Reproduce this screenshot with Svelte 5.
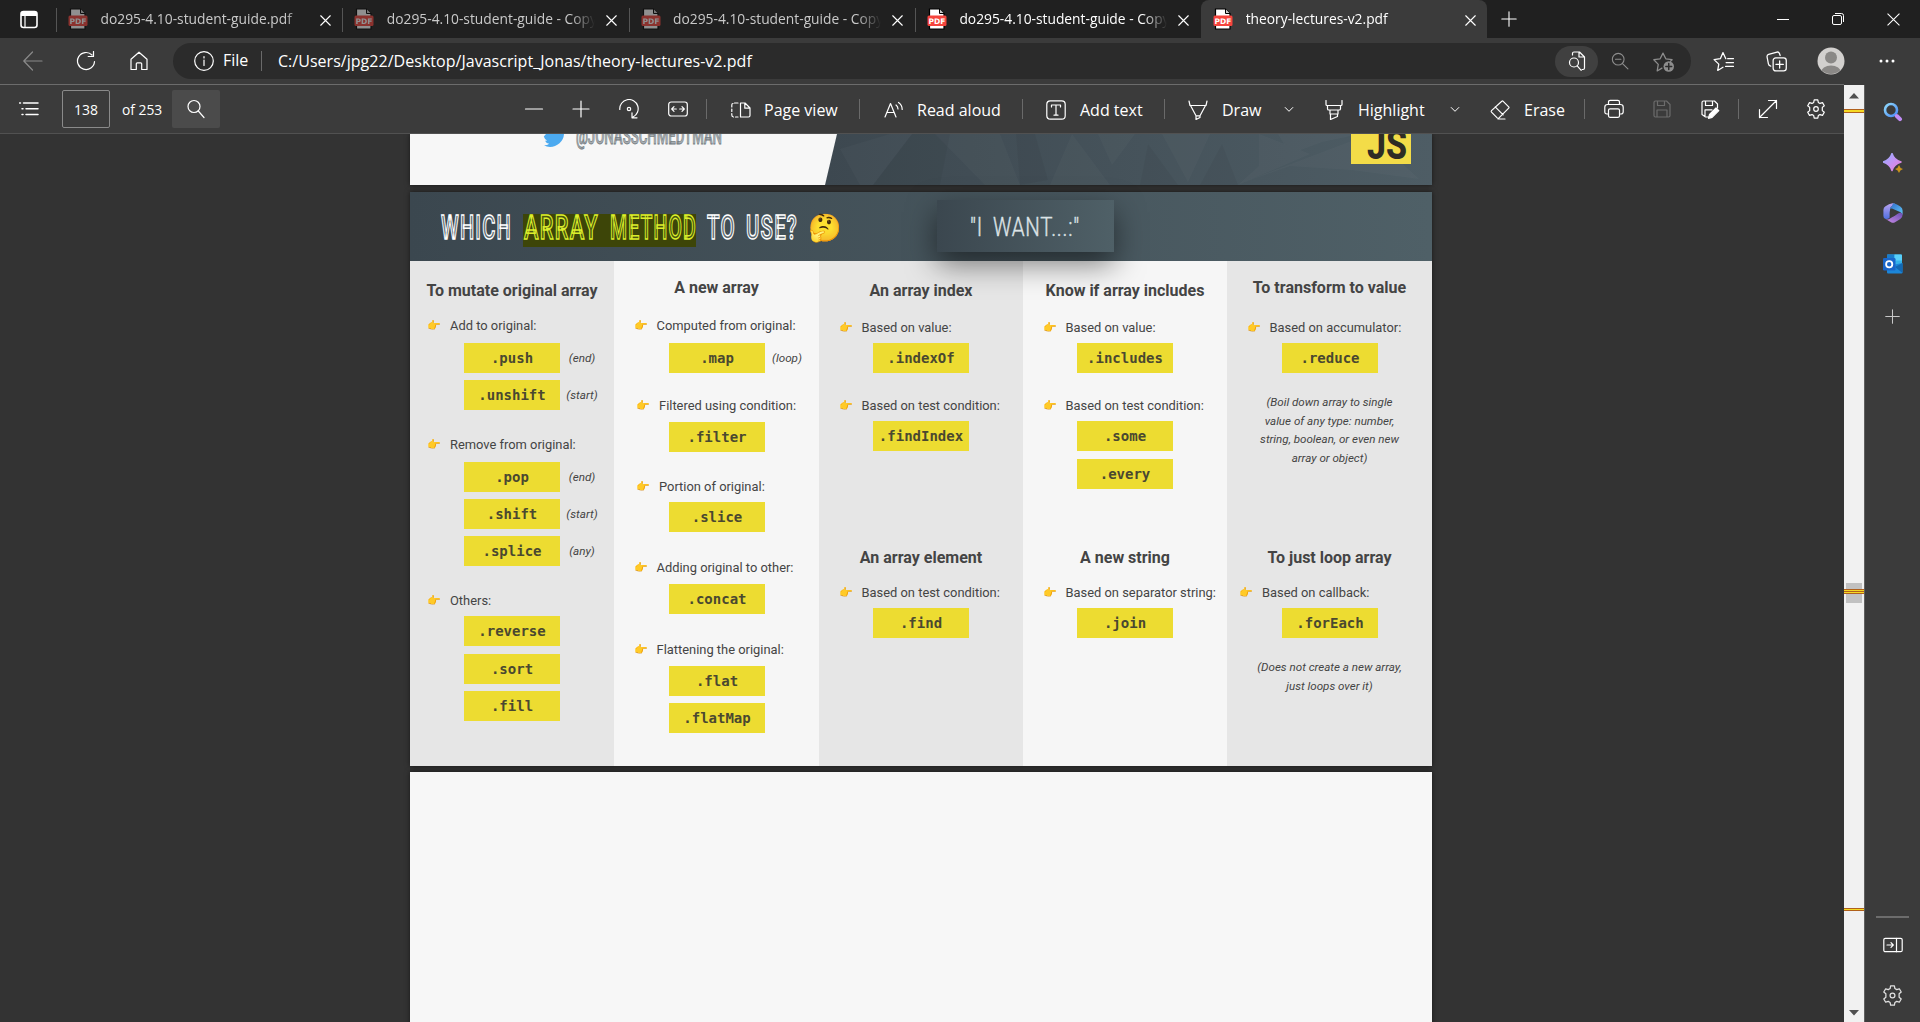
<script>
  const tabs = [
    { title: 'do295-4.10-student-guide.pdf', dim: true },
    { title: 'do295-4.10-student-guide - Copy', dim: true },
    { title: 'do295-4.10-student-guide - Copy', dim: true },
    { title: 'do295-4.10-student-guide - Copy', loaded: true },
    { title: 'theory-lectures-v2.pdf', loaded: true, active: true }
  ];

  // 20×20 line icons
  const icons = {
    close: '<path d="M5 5l10 10M15 5L5 15"/>',
    back: '<path d="M19 10H1.5M9.5 1L.8 10l8.700 9"/>',
    reload: '<path d="M18.500 10.500A8.500 8.500 0 1 1 16 4M17.500.5v5h-5.300"/>',
    home: '<path d="M2 8.300L10 1.200l8 7.100V18.500h-5.300v-5.700a1 1 0 0 0-1-1H8.300a1 1 0 0 0-1 1v5.700H2z"/>',
    info: '<circle cx="10" cy="10" r="9.300"/><path d="M10 9v5.500M10 5.500v1.500"/>',
    list: '<path d="M4.500 4H19M7 9.800h12M7 15.500h12M.5 4h1M3 9.800h1M3 15.500h1" stroke-width="1.500"/>',
    search: '<circle cx="8" cy="7.500" r="6"/><path d="M12.300 12L18 18.500"/>',
    minus: '<path d="M1.500 10h17"/>',
    plus: '<path d="M2 10h16M10 2v16"/>',
    rotate: '<path d="M.8 10.500A9.200 9.200 0 1 1 14 18M13 13.800v5h5"/><circle cx="10" cy="10" r="1.700"/>',
    fit: '<rect x=".7" y="3" width="18.600" height="14" rx="2.500"/><path d="M3.800 10h4.500M6 7.700L3.700 10 6 12.300M16.200 10h-4.500M14 7.700l2.300 2.300-2.300 2.300"/>',
    pages: '<path d="M9.500 3v14h8a1.500 1.500 0 0 0 1.500-1.500V8l-5-5zM13.800 3v5.200H19"/><path d="M7 3H3.500M2 3.500Q.8 3.500.8 5v2M.8 9v2.500M.8 13.500V15q0 1.800 1.700 2M4.500 17H7" />',
    read: '<path d="M1 17L6.500 3.500 12 17M3 12.500h7.200M12 5q2 1.500 2 4M14.500 2.500Q18.200 5 18.200 9.500"/>',
    text: '<rect x=".8" y=".8" width="18.400" height="18.400" rx="3.500"/><path d="M5.500 7V5h9v2M10 5v10M8 15.200h4"/>',
    draw: '<path d="M1 1l1 4.500h16L19 1M2.500 5.500L8 15.800h4L17.500 5.500M8 15.800v3.700l4-2v-1.700"/>',
    chevron: '<path d="M1.200 3.500L5 7.300l3.800-3.800" stroke-width="1"/>',
    highlight: '<path d="M2 .5v4q0 1 1 1h14q1 0 1-1v-4M3.500 5.500v3.200q0 1.300 1.300 1.300h10.400q1.300 0 1.300-1.300V5.500M6 10v4h8v-4M6.500 14v5.500l7-3V14"/>',
    erase: '<path d="M11.800 1.300q.7-.7 1.400 0L18.700 6.800q.7.700 0 1.400L9 17.900q-.9.800-1.800 0L1.500 12.200q-.7-.8 0-1.600zM5.200 6.800l8 8M8 19h7"/>',
    print: '<path d="M4.500 5.500V3q0-1.700 1.700-1.700h7.600q1.700 0 1.700 1.700v2.500M4.500 15H3q-2.200 0-2.200-2.200V8.200Q.8 5.500 3.500 5.500h13q2.700 0 2.700 2.700v4.600Q19.200 15 17 15h-1.500"/><rect x="4.500" y="9.800" width="11" height="8.500" rx="1.500"/>',
    save: '<path d="M2 3.500Q2 2 3.500 2h11L18 5.500v11q0 1.500-1.500 1.500h-13Q2 18 2 16.500zM5.500 2v4.500h7V2M5 18v-7h10v7"/>',
    saveas: '<path d="M9 18H5.500L2 15.500V3.500Q2 2 3.500 2h11L17.500 5v4M5.500 2v4.500h7V2M5 17.500v-6.700h7"/><path d="M8.500 19.300l1-3.800L16 9l2.800 2.600-6.700 6.700z" fill="#fff"/>',
    expand: '<path d="M1.500 18.500l17-17M10.500 1.500h8v8M1.500 10.500v8h8"/>',
    gear: '<path d="M7.700 3.400L8.200.9h3.600l.5 2.500 1.700 1 2.500-.8 1.800 3.100-2 1.700v3.200l2 1.700-1.800 3.100-2.500-.8-1.700 1-.5 2.500H8.200l-.5-2.500-1.700-1-2.500.8-1.800-3.100 2-1.700V8.400l-2-1.700 1.800-3.100 2.500.8z"/><circle cx="10" cy="10" r="2.300"/>',
    findpage: '<path d="M5.500 4V2.500q0-1.500 1.500-1.500h5.500l5 5v11q0 1.500-1.500 1.500h-1M12 1v5h5.500"/><circle cx="7" cy="11.500" r="4.500"/><path d="M10.200 14.800l4 4.500"/>',
    zoomout: '<circle cx="8" cy="8" r="6.500"/><path d="M12.800 12.800l6 6M5 8h6"/>',
    staradd: '<path d="M8.500 16.300L4 19l1-6.200L.8 8.300l6-.9L9.500 2l2.700 5.400 6 .9-1.500 1.500"/><circle cx="15" cy="14.800" r="5" fill="#8d8d8d" stroke="none"/><path d="M15 12v5.600M12.200 14.800h5.600" stroke="#2b2b2b" stroke-width="1.400"/>',
    starlist: '<path d="M9.500 15.500L4.500 18.500l1-6L1 8.200l6-.9L9.500 1.500l2.700 5.800M14 7.300h5.500M12.500 11h7M12 14.700h7.500"/>',
    collections: '<rect x="6.800" y="6.500" width="12.500" height="12.500" rx="2.500"/><path d="M13 9.300v7M9.500 12.800h7M4.500 14.500Q2.500 14 2.300 12.300L1 5.500Q.8 3.800 2.500 3.300L10.500 1q1.700-.3 2.300 1.300l.7 2"/>',
    panel: '<rect x=".8" y="3.300" width="18.400" height="13.400" rx="1.500"/><path d="M13.500 3.300v13.400M4 10h6M8 7.700l2.300 2.300L8 12.300"/>'
  };

  // h: heading, g: labelled group of method chips, n: aside; gap and pad are pixels of space above
  const columns = [
    [
      { h: 'To mutate original array', gap: 18 },
      { g: 'Add to original:', gap: 11, pad: 5, items: [['.push', '(end)'], ['.unshift', '(start)']] },
      { g: 'Remove from original:', gap: 23, pad: 5, items: [['.pop', '(end)'], ['.shift', '(start)'], ['.splice', '(any)']] },
      { g: 'Others:', gap: 23, pad: 3, loose: true, items: [['.reverse'], ['.sort'], ['.fill']] }
    ],
    [
      { h: 'A new array', gap: 15 },
      { g: 'Computed from original:', gap: 14, pad: 5, items: [['.map', '(loop)']] },
      { g: 'Filtered using condition:', gap: 21, pad: 4, inset: true, items: [['.filter']] },
      { g: 'Portion of original:', gap: 23, pad: 3, inset: true, items: [['.slice']] },
      { g: 'Adding original to other:', gap: 24, pad: 4, items: [['.concat']] },
      { g: 'Flattening the original:', gap: 24, pad: 4, items: [['.flat'], ['.flatMap']] }
    ],
    [
      { h: 'An array index', gap: 18 },
      { g: 'Based on value:', gap: 13, pad: 3, items: [['.indexOf']] },
      { g: 'Based on test condition:', gap: 21, pad: 3, items: [['.findIndex']] },
      { h: 'An array element', gap: 95 },
      { g: 'Based on test condition:', gap: 11, pad: 3, items: [['.find']] }
    ],
    [
      { h: 'Know if array includes', gap: 18 },
      { g: 'Based on value:', gap: 13, pad: 3, items: [['.includes']] },
      { g: 'Based on test condition:', gap: 21, pad: 3, loose: true, items: [['.some'], ['.every']] },
      { h: 'A new string', gap: 57 },
      { g: 'Based on separator string:', gap: 11, pad: 3, items: [['.join']] }
    ],
    [
      { h: 'To transform to value', gap: 15 },
      { g: 'Based on accumulator:', gap: 16, pad: 3, items: [['.reduce']] },
      { n: ['(Boil down array to single', 'value of any type: number,', 'string, boolean, or even new', 'array or object)'], gap: 20 },
      { h: 'To just loop array', gap: 78 },
      { g: 'Based on callback:', gap: 11, pad: 3, outdent: true, items: [['.forEach']] },
      { n: ['(Does not create a new array,', 'just loops over it)'], gap: 20 }
    ]
  ];
</script>

{#snippet icon(name, size = 20)}
  <svg class="ico" width={size} height={size} viewBox={name === 'chevron' ? '0 0 10 10' : '0 0 20 20'}>{@html icons[name]}</svg>
{/snippet}

<div class="window">
  <header class="tabstrip">
    <div class="tabmenu">
      <svg width="18" height="19" viewBox="0 0 18 19">
        <rect x="1" y="1.500" width="16" height="16" rx="2.500" fill="none" stroke="#fff" stroke-width="1.600" />
        <path d="M1 6V4q0-2.500 2.500-2.500h11Q17 1.500 17 4v2z" fill="#fff" />
        <path d="M5 6v11" stroke="#fff" stroke-width="1.200" />
      </svg>
    </div>
    {#each tabs as tab}
      <div class="tab" class:active={tab.active} class:loaded={tab.loaded}>
        <svg class="pdf" class:dim={tab.dim} width="20" height="22" viewBox="0 0 20 22">
          <path d="M2.500 1h10l4.500 4.500V21H2.500z" fill="#fff" stroke="#000" stroke-width="1.200" />
          <path d="M12.500 1v4.500H17" fill="#ccc" stroke="#000" />
          <rect x=".5" y="7.500" width="19" height="10.500" rx="1.500" fill="#f5443d" />
          <text x="10" y="15.700" text-anchor="middle" font-size="7.500">PDF</text>
        </svg>
        <span class="title">{tab.title}</span>
        <span class="x">{@render icon('close', 19)}</span>
      </div>
    {/each}
    <div class="newtab">{@render icon('plus', 18)}</div>
    <div class="winctl">
      <svg width="12" height="12" viewBox="0 0 12 12"><path d="M0 6.500h12" /></svg>
      <svg width="12" height="12" viewBox="0 0 12 12"><rect x=".5" y="2.500" width="9" height="9" rx="1.500" /><path d="M3 .5h6.500q2 0 2 2V9" /></svg>
      <svg width="13" height="13" viewBox="0 0 12 12"><path d="M.5.5l11 11M11.500.5l-11 11" /></svg>
    </div>
  </header>

  <nav class="navbar">
    <span class="navbtn off">{@render icon('back')}</span>
    <span class="navbtn">{@render icon('reload')}</span>
    <span class="navbtn">{@render icon('home')}</span>
    <div class="address">
      {@render icon('info')}
      <span class="scheme">File</span>
      <span class="url">C:/Users/jpg22/Desktop/Javascript_Jonas/theory-lectures-v2.pdf</span>
      <span class="pill">{@render icon('findpage', 20)}</span>
      <span class="fade">{@render icon('zoomout', 18)}</span>
      <span class="fade star">{@render icon('staradd', 21)}</span>
    </div>
    <div class="actions">
      {@render icon('starlist', 21)}
      {@render icon('collections', 21)}
      <svg class="avatar" width="28" height="28" viewBox="0 0 28 28">
        <defs><clipPath id="face"><circle cx="14" cy="14" r="13" /></clipPath></defs>
        <circle cx="14" cy="14" r="13.500" fill="#d2d0ce" />
        <circle cx="14" cy="10.500" r="6" fill="#8a8886" />
        <ellipse cx="14" cy="25.500" rx="10" ry="7" fill="#8a8886" clip-path="url(#face)" />
      </svg>
      <svg width="16" height="4" viewBox="0 0 16 4" fill="#fff"><circle cx="2" cy="2" r="1.500" /><circle cx="8" cy="2" r="1.500" /><circle cx="14" cy="2" r="1.500" /></svg>
    </div>
  </nav>

  <div class="body">
    <main class="main">
      <div class="toolbar">
        <span>{@render icon('list')}</span>
        <span class="pagebox">138</span>
        <span class="count">of 253</span>
        <span class="find">{@render icon('search', 20)}</span>
        <span>{@render icon('minus')}</span>
        <span>{@render icon('plus')}</span>
        <span>{@render icon('rotate')}</span>
        <span>{@render icon('fit')}</span>
        <i></i>
        <span class="tool">{@render icon('pages')}Page view</span>
        <i></i>
        <span class="tool">{@render icon('read')}Read aloud</span>
        <i></i>
        <span class="tool wide">{@render icon('text')}Add text</span>
        <i></i>
        <span class="tool wide">{@render icon('draw')}Draw</span>
        <span>{@render icon('chevron', 10)}</span>
        <span class="tool wide">{@render icon('highlight')}Highlight</span>
        <span>{@render icon('chevron', 10)}</span>
        <span class="tool wide">{@render icon('erase')}Erase</span>
        <i></i>
        <span>{@render icon('print')}</span>
        <span class="disabled">{@render icon('save')}</span>
        <span>{@render icon('saveas')}</span>
        <i></i>
        <span>{@render icon('expand')}</span>
        <span>{@render icon('gear')}</span>
      </div>

      <div class="viewer">
        <section class="page cover">
          <svg width="1022" height="51" viewBox="0 0 1022 51">
            <defs>
              <linearGradient id="slate" x1="0" x2="1"><stop offset="0" stop-color="#3d4850" /><stop offset="1" stop-color="#4e5d65" /></linearGradient>
            </defs>
            <path d="M427 0H1022V51H415z" fill="url(#slate)" />
            <g fill="#fff" opacity=".018">
              <path d="M430 15L450 51H463L502 0H480z" />
              <path d="M525 0L575 51H610L590 0z" />
              <path d="M688 0L702 31 725 0zM640 51L662 0 700 51z" />
              <path d="M752 0L778 48 800 0zM828 51L849 32V0L900 20z" />
              <path d="M868 0L880 20 912 8 950 0zM826 51L880 32 942 36 1009 45 960 0z" />
            </g>
            <g fill="#000" opacity=".035">
              <path d="M463 51L502 0 540 0 530 51z" />
              <path d="M610 51L638 46 625 0H606z" />
              <path d="M730 51L738 10 768 51zM790 51L812 10 828 51z" />
            </g>
            <path d="M136 0h18q-.3 5.500-4.500 9.300-4.200 3.700-9.500 3.700-3.300 0-6-1.800 3 .2 5.200-1.500-2.900-.2-4.200-3 1 .2 2-.1-2.500-1.500-3.200-4z" fill="#4caaf0" />
            <text class="handle" x="166" y="10" textLength="146" lengthAdjust="spacingAndGlyphs">@JONASSCHMEDTMAN</text>
            <rect x="941" y="0" width="60" height="30" fill="#f3dc48" />
            <text class="js" x="957" y="25" textLength="40" lengthAdjust="spacingAndGlyphs">JS</text>
          </svg>
        </section>

        <section class="page slide">
          <div class="banner">
            <svg width="527" height="69" viewBox="0 0 527 69">
              <rect x="113" y="22" width="173" height="33" fill="#3d4508" />
              <text class="display" x="31" y="47" textLength="71" lengthAdjust="spacingAndGlyphs">WHICH</text>
              <text class="display lime" x="114" y="47" textLength="75" lengthAdjust="spacingAndGlyphs">ARRAY</text>
              <text class="display lime" x="200" y="47" textLength="87" lengthAdjust="spacingAndGlyphs">METHOD</text>
              <text class="display" x="297" y="47" textLength="29" lengthAdjust="spacingAndGlyphs">TO</text>
              <text class="display" x="336" y="47" textLength="52" lengthAdjust="spacingAndGlyphs">USE?</text>
              <text class="think" x="415.500" y="44.500" text-anchor="middle">🤔</text>
            </svg>
            <div class="want">
              <svg width="177" height="52" viewBox="0 0 177 52">
                <text class="display small" x="33" y="35.500" textLength="13" lengthAdjust="spacingAndGlyphs">"I</text>
                <text class="display small" x="56" y="35.500" textLength="87" lengthAdjust="spacingAndGlyphs">WANT...:"</text>
              </svg>
            </div>
          </div>
          <div class="columns">
            {#each columns as blocks}
              <div class="col">
                {#each blocks as b}
                  {#if b.h}
                    <h2 style:margin-top="{b.gap}px">{b.h}</h2>
                  {:else if b.n}
                    <p class="aside" style:margin-top="{b.gap}px">
                      {#each b.n as line}<span>{line}</span>{/each}
                    </p>
                  {:else}
                    <div class="group" style:margin-top="{b.gap}px">
                      <div class="label" class:inset={b.inset} class:outdent={b.outdent}><span class="hand">👉</span>{b.g}</div>
                      <div class="chips" class:loose={b.loose} style:margin-top="{b.pad}px">
                        {#each b.items as [name, note]}
                          <code>{name}</code>
                          <em>{note ?? ''}</em>
                        {/each}
                      </div>
                    </div>
                  {/if}
                {/each}
              </div>
            {/each}
          </div>
        </section>

        <section class="page blank"></section>
      </div>
    </main>

    <div class="scrollbar">
      <svg width="20" height="937" viewBox="0 0 20 937">
        <path d="M10 8l5 5.500H5zM10 930.500l5-5.500H5z" fill="#505050" />
        <rect x="2" y="498" width="16" height="20" fill="#c1c1c1" />
        <path d="M0 24.500h20M0 27.500h20M0 504.500h20M0 506.500h20M0 508.500h20M0 823.500h20M0 825.500h20" stroke="#b0601c" />
        <path d="M0 25.500h20M0 26.500h20M0 505.500h20M0 507.500h20M0 824.500h20" stroke="#f5d923" />
      </svg>
    </div>

    <aside class="sidebar">
      <svg width="20" height="20" viewBox="0 0 20 20">
        <defs>
          <linearGradient id="lens" x1="0" y1="0" x2="1" y2="1"><stop offset="0" stop-color="#8fd8fb" /><stop offset="1" stop-color="#4a8bf5" /></linearGradient>
          <linearGradient id="spark" x1="0" y1="0" x2="1" y2="1"><stop offset="0" stop-color="#8db4ff" /><stop offset=".5" stop-color="#c493f5" /><stop offset="1" stop-color="#ef7bd5" /></linearGradient>
          <linearGradient id="hexa" x1="0" y1="0" x2="0" y2="1"><stop offset="0" stop-color="#b9a3f0" /><stop offset="1" stop-color="#4f6fe0" /></linearGradient>
          <linearGradient id="hexb" x1="0" y1="0" x2="1" y2="1"><stop offset="0" stop-color="#2f6ccb" /><stop offset="1" stop-color="#62c8f5" /></linearGradient>
          <linearGradient id="hexc" x1="0" y1="1" x2="1" y2="0"><stop offset="0" stop-color="#c98be6" /><stop offset="1" stop-color="#6a4fb3" /></linearGradient>
        </defs>
        <circle cx="8" cy="8" r="6" fill="none" stroke="url(#lens)" stroke-width="2.600" />
        <path d="M13.800 14L17 17.200" stroke="#c18cf5" stroke-width="4" stroke-linecap="round" />
      </svg>
      <svg width="20" height="20" viewBox="0 0 20 20">
        <path d="M9 .5q2 6.500 9 8.500-7 2-9 8.500Q7 11 0 9q7-2 9-8.500z" fill="url(#spark)" stroke="url(#spark)" stroke-width="1.500" stroke-linejoin="round" />
        <path d="M16 12q.8 3.200 4 4-3.200.800-4 4-.8-3.200-4-4 3.200-.800 4-4z" fill="#c8931c" />
      </svg>
      <svg width="20" height="20" viewBox="0 0 20 20">
        <path d="M9.500.3Q6 1 2.500 3.300.4 4.500.4 7v6q0 2.500 2.300 3 2 .300 3.800-1l.5-8.500q.200-2.300 2-3.500L12 .8Q10.800.100 9.500.3z" fill="url(#hexa)" />
        <path d="M10 .3q2 .100 7.300 3.200Q19.600 5 19.600 7.500V12q-.5-2-2.500-3L9 5.500Q7.500 5 7 6.500 7 4 9 3z" fill="url(#hexb)" />
        <path d="M19.600 11q.200 3.500-2.300 5l-5.300 3.200q-2 1-4 0L2.500 16q2.500 1 4.500-.5l9-5.500q2-1 3.600 1z" fill="url(#hexc)" />
        <path d="M10 6.800l3.200 1.700v3.300L10 13.500l-3.200-1.700V8.500z" fill="#3b3b3b" />
      </svg>
      <svg width="20" height="20" viewBox="0 0 20 20">
        <rect x="4" y=".5" width="15" height="12" rx="1" fill="#35b3ea" />
        <path d="M4 .5h7.500v6H4z" fill="#1a7ccc" /><path d="M11.500 .5H18q1 0 1 1v5h-7.500z" fill="#59d0fa" />
        <path d="M4 12L19.500 9v9.500q0 1-1 1H5q-1 0-1-1z" fill="#1c86d8" /><path d="M19.500 9v10L12 13z" fill="#1268b3" />
        <rect x="0" y="4" width="12.500" height="12.500" rx="1.300" fill="#1a66c9" />
        <circle cx="6.200" cy="10.200" r="3.100" fill="none" stroke="#fff" stroke-width="1.800" />
      </svg>
      <span class="add">{@render icon('plus', 17)}</span>
      <hr />
      {@render icon('panel')}
      <span class="cog">{@render icon('gear', 21)}</span>
    </aside>
  </div>
</div>

<style>
  :global(body) { margin: 0; background: #333; overflow: hidden; }
  * { box-sizing: border-box; }
  svg { display: block; flex: none; }
  .window { width: 1920px; height: 1022px; display: flex; flex-direction: column; overflow: hidden; background: #3b3b3b; color: #fff; font-family: 'Open Sans', 'Noto Sans', sans-serif; }
  .ico { fill: none; stroke: currentColor; stroke-width: 1.2; stroke-linecap: round; stroke-linejoin: round; }

  .tabstrip { height: 38px; display: flex; background: #202020; }
  .tabmenu { width: 56px; padding: 10px 0 0 20px; }
  .tab { width: 286.300px; height: 38px; display: flex; align-items: center; padding-left: 12px; font-size: 13.800px; color: #c9c9c9; position: relative; }
  .tab::before { content: ''; position: absolute; left: 0; top: 8px; width: 1px; height: 24px; background: #555; }
  .tab.loaded { color: #fff; }
  .tab.active { background: #3b3b3b; border-radius: 8px 8px 0 0; }
  .tab.active::before { display: none; }
  .pdf text { fill: #fff; font-family: 'DejaVu Sans', sans-serif; font-weight: 700; }
  .pdf.dim { opacity: .5; }
  .title { width: 211px; margin-left: 12.500px; overflow: hidden; white-space: nowrap; line-height: 20px; mask-image: linear-gradient(90deg, #000 184px, transparent 208px); }
  .x { width: 19px; margin-left: 4px; margin-top: 2px; color: #fff; }
  .newtab { width: 40px; padding: 10px 0 0 13px; }
  .winctl { margin-left: auto; width: 143px; padding-right: 20px; display: flex; justify-content: space-between; align-items: center; fill: none; stroke: #fff; stroke-width: 1; }

  .navbar { height: 46px; flex: none; display: flex; align-items: center; padding-left: 6px; }
  .navbtn { width: 53px; display: flex; justify-content: center; }
  .off { color: #8a8a8a; }
  .address { width: 1518px; height: 36px; margin-left: 8px; border-radius: 18px; background: #2b2b2b; display: flex; align-items: center; padding-left: 21px; font-size: 16px; }
  .scheme { width: 39px; margin-left: 9px; height: 20px; line-height: 19px; border-right: 1px solid #6a6a6a; }
  .url { margin-left: 16px; width: 1277px; letter-spacing: .03px; }
  .pill { width: 43px; height: 31px; border-radius: 16px; background: #404040; display: flex; align-items: center; justify-content: center; }
  .fade { margin-left: 13px; color: #8d8d8d; }
  .fade.star { margin-left: 24px; }
  .actions { display: flex; align-items: center; margin-left: 22px; gap: 32px; }
  .avatar { margin: 0 2px 0 -2px; }

  .body { flex: 1; display: flex; min-height: 0; }
  .main { width: 1844px; display: flex; flex-direction: column; border-top: 1px solid #6c6c6c; }
  .toolbar { height: 49px; flex: none; display: grid; grid-template-columns: 43px 60px 50px 352px 47px 48px 49px 38px 25px 128px 25px 138px 24px 118px 24px 96px 40px 126px 40px 94px 20px 48px 48px 38px 20px 48px 38px; align-items: center; padding-left: 19px; background: #3b3b3b; border-bottom: 1px solid #515151; }
  .toolbar i { width: 1px; height: 20px; background: #6a6a6a; }
  .pagebox { width: 48px; height: 38px; border: 1px solid #8a8a8a; border-radius: 2px; font-size: 14px; line-height: 38px; text-align: center; }
  .count { font-size: 13.800px; }
  .find { width: 48px; height: 38px; border-radius: 2px; background: #4b4b4b; display: flex; align-items: center; justify-content: center; }
  .tool { display: flex; align-items: center; gap: 13px; font-size: 16px; line-height: 24px; padding-top: 1px; white-space: nowrap; }
  .tool.wide { gap: 14px; }
  .disabled { color: #6c6c6c; }

  .viewer { flex: 1; min-height: 0; overflow: hidden; background: #333; display: flex; flex-direction: column; align-items: center; padding-right: 2px; }
  .page { width: 1022px; flex: none; box-shadow: 0 0 5px rgba(0, 0, 0, .55); }
  .cover { height: 51px; margin-bottom: 7px; background: #f7f7f7; overflow: hidden; }
  .handle { font: 500 24px Roboto, sans-serif; fill: #a9afb3; stroke: #737b80; stroke-width: .8px; }
  .js { font: 800 43px Roboto, sans-serif; fill: #2e2c24; }
  .slide { height: 574px; display: flex; flex-direction: column; margin-bottom: 6px; }
  .banner { height: 69px; flex: none; display: flex; align-items: flex-start; background: linear-gradient(90deg, #3b474f, #4f6067); position: relative; z-index: 1; }
  .want { width: 177px; height: 52px; margin-top: 8px; background: linear-gradient(90deg, #3b474f, #4f6067); box-shadow: 0 12px 30px rgba(0, 0, 0, .5); }
  .display { font: 500 33.500px Roboto, sans-serif; fill: #59666e; stroke: #fff; stroke-width: 1.500px; letter-spacing: 2px; }
  .display.lime { fill: #4a5410; stroke: #dbee2b; }
  .display.small { font-size: 26px; font-weight: 300; letter-spacing: 1px; stroke-width: .4px; fill: #dde3e6; stroke: #dde3e6; }
  .think { font-size: 27px; font-family: 'Noto Color Emoji', sans-serif; }

  .columns { flex: 1; display: grid; grid-template-columns: 204px 205px 204px 204px 205px; color: #444; font-family: Roboto, sans-serif; }
  .col { background: #e6e6e6; display: flex; flex-direction: column; }
  .col:nth-child(even) { background: #f6f6f6; }
  h2 { margin: 0; height: 24px; line-height: 24px; font-size: 16px; font-weight: 700; text-align: center; white-space: nowrap; }
  .label { height: 24px; line-height: 24px; font-size: 12.900px; padding-left: 20px; display: flex; white-space: nowrap; }
  .col:first-child .label { padding-left: 17.500px; }
  .col .label.inset { padding-left: 22.500px; }
  .col .label.outdent { padding-left: 12.500px; }
  .hand { width: 22.500px; font-size: 11px; line-height: 23px; font-family: 'Noto Color Emoji', sans-serif; }
  .chips { display: grid; grid-template-columns: 96px 1fr; grid-auto-rows: 30px; row-gap: 7px; padding-left: 54px; }
  .chips.loose { row-gap: 7.500px; }
  .col:nth-child(2) .chips, .col:nth-child(5) .chips { padding-left: 55px; }
  code { background: #eddc31; color: #4a4830; font: 700 14px/30px 'DejaVu Sans Mono', monospace; text-align: center; }
  em { font-size: 11.700px; line-height: 30px; text-align: center; padding-right: 10px; }
  .aside { margin: 0; display: flex; flex-direction: column; align-items: center; font-size: 11.600px; font-style: italic; line-height: 18.700px; white-space: nowrap; }
  .blank { height: 300px; background: #f7f7f7; }

  .scrollbar { width: 20px; background: #f1f1f1; margin-top: 1px; }
  .sidebar { flex: 1; border-left: 1px solid #606060; margin-top: 1px; display: flex; flex-direction: column; align-items: center; padding: 17px 0 16px; gap: 30.500px; }
  .add { margin-top: 4px; color: #c8c8c8; }
  hr { width: 33px; height: 2px; margin: auto 0 -14px; border: 0; background: #6c6c6c; }
  .cog { color: #e0e0e0; }
</style>
